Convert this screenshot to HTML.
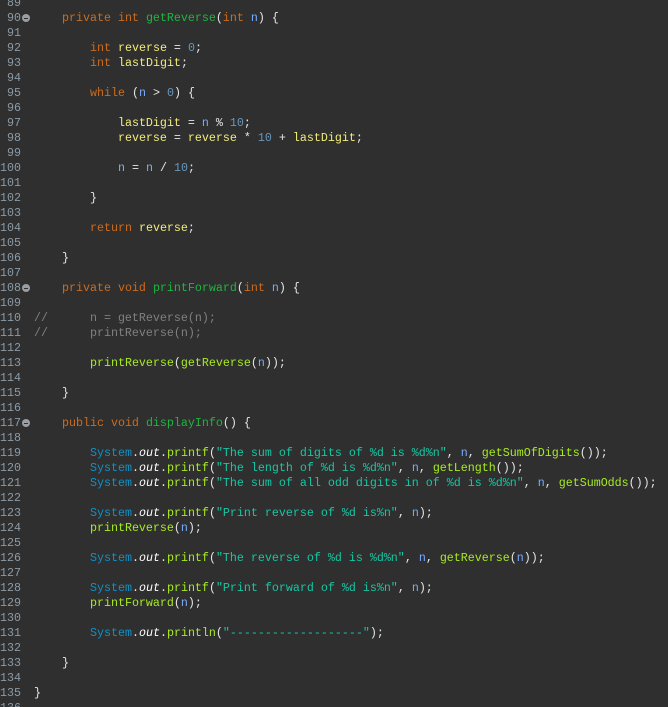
<!DOCTYPE html>
<html><head><meta charset="utf-8"><style>
html,body{margin:0;padding:0;background:#2f2f2f;width:668px;height:707px;overflow:hidden}
#w{position:relative;width:668px;height:707px}
.ln{position:absolute;left:0;top:-4px;width:21px;text-align:right;color:#8c9ba6;font:11.67px/15px "Liberation Mono",monospace;white-space:pre}
pre{position:absolute;left:34px;top:-4px;margin:0;font:11.67px/15px "Liberation Mono",monospace;color:#e6e6e6;white-space:pre}
.k{color:#cc6c1d}.d{color:#1eb540}.m{color:#a7ec21}.v{color:#f3ec79}.p{color:#79abff}.n{color:#6897bb}.s{color:#17c6a3}.sy{color:#1290c3}.o{color:#fff;font-style:italic}.c{color:#808080}
.f{position:absolute;left:22px;width:8px;height:8px;border-radius:50%;background:#9a9ea3}
.f:after{content:"";position:absolute;left:2px;top:3.5px;width:4px;height:1px;background:#2f2f2f}
</style></head><body><div id="w">
<div class="ln">89
90
91
92
93
94
95
96
97
98
99
100
101
102
103
104
105
106
107
108
109
110
111
112
113
114
115
116
117
118
119
120
121
122
123
124
125
126
127
128
129
130
131
132
133
134
135
136</div>
<div class="f" style="top:14px"></div>
<div class="f" style="top:284px"></div>
<div class="f" style="top:419px"></div>
<pre>

    <span class="k">private int</span> <span class="d">getReverse</span>(<span class="k">int</span> <span class="p">n</span>) {

        <span class="k">int</span> <span class="v">reverse</span> = <span class="n">0</span>;
        <span class="k">int</span> <span class="v">lastDigit</span>;

        <span class="k">while</span> (<span class="p">n</span> &gt; <span class="n">0</span>) {

            <span class="v">lastDigit</span> = <span class="p">n</span> % <span class="n">10</span>;
            <span class="v">reverse</span> = <span class="v">reverse</span> * <span class="n">10</span> + <span class="v">lastDigit</span>;

            <span class="p">n</span> = <span class="p">n</span> / <span class="n">10</span>;

        }

        <span class="k">return</span> <span class="v">reverse</span>;

    }

    <span class="k">private void</span> <span class="d">printForward</span>(<span class="k">int</span> <span class="p">n</span>) {

<span class="c">//      n = getReverse(n);</span>
<span class="c">//      printReverse(n);</span>

        <span class="m">printReverse</span>(<span class="m">getReverse</span>(<span class="p">n</span>));

    }

    <span class="k">public void</span> <span class="d">displayInfo</span>() {

        <span class="sy">System</span>.<span class="o">out</span>.<span class="m">printf</span>(<span class="s">"The sum of digits of %d is %d%n"</span>, <span class="p">n</span>, <span class="m">getSumOfDigits</span>());
        <span class="sy">System</span>.<span class="o">out</span>.<span class="m">printf</span>(<span class="s">"The length of %d is %d%n"</span>, <span class="p">n</span>, <span class="m">getLength</span>());
        <span class="sy">System</span>.<span class="o">out</span>.<span class="m">printf</span>(<span class="s">"The sum of all odd digits in of %d is %d%n"</span>, <span class="p">n</span>, <span class="m">getSumOdds</span>());

        <span class="sy">System</span>.<span class="o">out</span>.<span class="m">printf</span>(<span class="s">"Print reverse of %d is%n"</span>, <span class="p">n</span>);
        <span class="m">printReverse</span>(<span class="p">n</span>);

        <span class="sy">System</span>.<span class="o">out</span>.<span class="m">printf</span>(<span class="s">"The reverse of %d is %d%n"</span>, <span class="p">n</span>, <span class="m">getReverse</span>(<span class="p">n</span>));

        <span class="sy">System</span>.<span class="o">out</span>.<span class="m">printf</span>(<span class="s">"Print forward of %d is%n"</span>, <span class="p">n</span>);
        <span class="m">printForward</span>(<span class="p">n</span>);

        <span class="sy">System</span>.<span class="o">out</span>.<span class="m">println</span>(<span class="s">"-------------------"</span>);

    }

}
</pre>
</div></body></html>
